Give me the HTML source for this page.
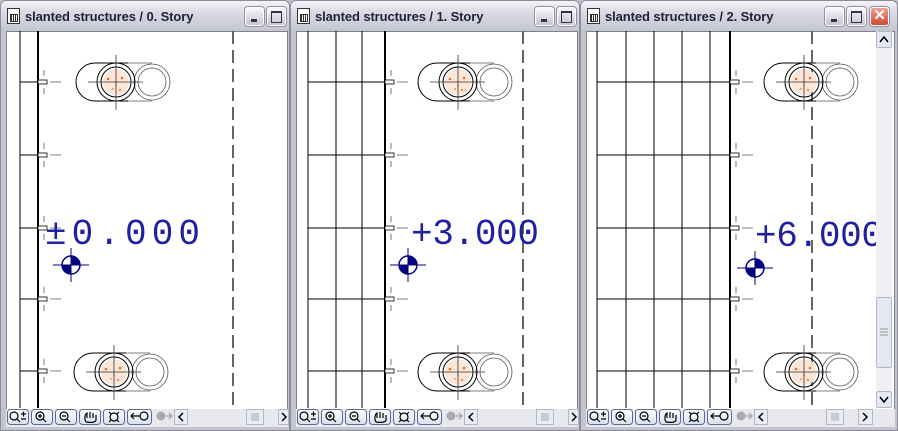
<!DOCTYPE html>
<html><head><meta charset="utf-8"><style>
body{margin:0;width:898px;height:431px;overflow:hidden;background:#c0c0c8;font-family:Tahoma,"Liberation Sans",sans-serif}
.win{position:absolute;top:0;height:431px;border:1px solid #8c8c9c;box-sizing:border-box;border-radius:6px 6px 0 0;
 background:linear-gradient(#f4f4f8 0,#dcdce6 10px,#c6c8d4 28px,#c4c4cc 30px)}
.title{position:absolute;left:24px;top:8px;font-size:13px;font-weight:bold;color:#22223a;letter-spacing:-0.1px;font-family:"Liberation Sans",sans-serif}
.ic{position:absolute;left:6px;top:7px;width:11px;height:14px;background:#fff;border:1px solid #333}
.ic:after{content:"";position:absolute;left:2px;top:5px;width:6px;height:6px;border:1px solid #333;background:repeating-linear-gradient(90deg,#333 0 1px,#fff 1px 2px)}
.btn{position:absolute;top:6px;width:19px;height:19px;border:1px solid #fff;border-radius:3px;box-sizing:border-box;background:linear-gradient(#f8f8fc,#c4c4d4);box-shadow:0 0 0 1px #9090a0}
.content{position:absolute;top:30px;background:#fff;border:1px solid #808090;box-sizing:border-box}
.tb{position:absolute;top:408px;height:18px;background:#e8e8ee}
svg{position:absolute;left:0;top:0}
</style></head><body>

<div class="win" style="left:0;width:290px">
 <div class="ic"></div><div class="title">slanted structures / 0. Story</div>
 <div class="btn" style="left:244px"><div style="position:absolute;left:5px;top:11px;width:6px;height:3px;background:#334"></div></div>
 <div class="btn" style="left:266px"><div style="position:absolute;left:3px;top:3px;width:9px;height:9px;border:1px solid #334;border-top-width:2px"></div></div>
 <div class="content" style="left:5px;width:282px;height:379px"></div>
 <div class="tb" style="left:5px;width:282px"></div>
</div>
<div class="win" style="left:290px;width:290px">
 <div class="ic"></div><div class="title">slanted structures / 1. Story</div>
 <div class="btn" style="left:244px"><div style="position:absolute;left:5px;top:11px;width:6px;height:3px;background:#334"></div></div>
 <div class="btn" style="left:266px"><div style="position:absolute;left:3px;top:3px;width:9px;height:9px;border:1px solid #334;border-top-width:2px"></div></div>
 <div class="content" style="left:5px;width:282px;height:379px"></div>
 <div class="tb" style="left:5px;width:282px"></div>
</div>
<div class="win" style="left:580px;width:318px">
 <div class="ic"></div><div class="title">slanted structures / 2. Story</div>
 <div class="btn" style="left:244px"><div style="position:absolute;left:5px;top:11px;width:6px;height:3px;background:#334"></div></div>
 <div class="btn" style="left:266px"><div style="position:absolute;left:3px;top:3px;width:9px;height:9px;border:1px solid #334;border-top-width:2px"></div></div>
 <div class="btn" style="left:289px;background:linear-gradient(#f0a090,#d04830);color:#fff;font-size:15px;line-height:16px;text-align:center;font-weight:bold">✕</div>
 <div class="content" style="left:5px;width:309px;height:379px"></div>
 <div class="tb" style="left:5px;width:309px"></div>
</div>

<svg width="898" height="431" viewBox="0 0 898 431">
<defs>
 <linearGradient id="bg" x1="0" y1="0" x2="0" y2="1"><stop offset="0" stop-color="#fff"/><stop offset="1" stop-color="#d8e0ee"/></linearGradient>
 <g id="cir">
  <path d="M-21,-19 A19,19 0 0 0 -21,19 H12 M-21,-19 H12" fill="none" stroke="#000" stroke-width="1"/>
  <path d="M12,-19 H36 M12,19 H36" stroke="#555" stroke-width="0.8"/>
  <circle cx="36" cy="0" r="18" fill="none" stroke="#555" stroke-width="0.8"/>
  <circle cx="36" cy="0" r="14" fill="none" stroke="#555" stroke-width="0.8"/>
  <circle r="13" fill="#fbe6d8"/>
  <circle r="19" fill="none" stroke="#000"/>
  <circle r="15" fill="none" stroke="#000"/>
  <g fill="#e07020"><circle cx="-8" cy="-3" r="1.3"/><circle cx="6" cy="-4" r="1.3"/><circle cx="0" cy="3" r="0.8"/><circle cx="-3" cy="7" r="0.8"/><circle cx="4" cy="8" r="1"/></g>
  <path d="M0,-27 V28 M-28,0 H27" stroke="#333" stroke-width="0.8"/>
 </g>
 <g id="mk">
  <circle r="9" fill="#fff" stroke="#000080" stroke-width="1.5"/>
  <path d="M0,0 V-9 A9,9 0 0 1 9,0 Z M0,0 V9 A9,9 0 0 1 -9,0 Z" fill="#000080"/>
  <path d="M0,-17 V17 M-18,0 H18" stroke="#000080" stroke-width="1"/>
 </g>
 <g id="tick">
  <rect x="0" y="-2" width="9" height="4" fill="#fff" stroke="#000" stroke-width="0.8"/>
  <path d="M12,0 H23 M6,-12 V-6 M6,6 V12" stroke="#555" stroke-width="0.8"/>
 </g>
 <g id="tools">
  <g fill="url(#bg)" stroke="#5a6a9a">
   <rect x="0.5" y="0.5" width="21" height="15" rx="3"/><rect x="24.5" y="0.5" width="21" height="15" rx="3"/><rect x="48.5" y="0.5" width="21" height="15" rx="3"/><rect x="72.5" y="0.5" width="21" height="15" rx="3"/><rect x="96.5" y="0.5" width="21" height="15" rx="3"/><rect x="120.5" y="0.5" width="24" height="15" rx="3"/>
  </g>
  <g fill="none" stroke="#000" stroke-width="1.2">
   <circle cx="7" cy="7" r="4"/><path d="M10,10 L13,13 M14,5 H19 M16.5,2.5 V7.5 M14,10 H19"/>
   <circle cx="33" cy="7" r="4"/><path d="M36,10 L39,13 M31,7 H35 M33,5 V9"/>
   <circle cx="57" cy="7" r="4"/><path d="M60,10 L63,13 M55,7 H59"/>
   <path d="M79,13 C77,10 78,5 80,4 V9 M83,3 V9 M86,4 V9 M89,6 V11 C89,13 85,14 79,13"/>
   <circle cx="107" cy="8" r="4"/><path d="M102,3 L104,5 M112,3 L110,5 M102,13 L104,11 M112,13 L110,11"/>
   <circle cx="137" cy="7" r="4"/><path d="M133,7 H124 M127,4 L124,7 L127,10"/>
  </g>
  <g fill="#aaa" stroke="#aaa"><circle cx="154" cy="7" r="4"/><path d="M159,7 H165 M162,4 L165,7 L162,10" fill="none" stroke-width="1.5"/></g>
 </g>
 <g id="bar">
  <rect x="174.5" y="409.5" width="13" height="15" fill="#e8ecf4" stroke="#b0b8c8"/>
  <path d="M183,413 L179,417 L183,421" fill="none" stroke="#000" stroke-width="1.5"/>
  <rect x="246.5" y="409.5" width="17" height="15" fill="#e8ecf4" stroke="#b0b8c8"/>
  <path d="M252,413 V421 M254,413 V421 M256,413 V421 M258,413 V421" stroke="#999" stroke-width="0.8"/>
 </g>
</defs>

<!-- Window 1 drawing -->
<g>
 <path d="M20,31 V408" stroke="#000" stroke-width="1"/>
 <path d="M38,31 V408" stroke="#000" stroke-width="2"/>
 <path d="M20,82 H38 M20,155 H38 M20,228 H38 M20,299 H38 M20,371 H38" stroke="#000"/>
 <use href="#tick" x="38" y="82"/><use href="#tick" x="38" y="155"/><use href="#tick" x="38" y="228"/><use href="#tick" x="38" y="299"/><use href="#tick" x="38" y="371"/>
 <path d="M233,31 V408" stroke="#666" stroke-width="2" stroke-dasharray="13,6"/>
 <use href="#cir" x="116" y="82"/><use href="#cir" x="114" y="372"/>
 <text x="45" y="244" font-family="Liberation Mono,monospace" font-size="36" fill="#2020a0" textLength="155" lengthAdjust="spacing">±0.000</text>
 <use href="#mk" x="71" y="265"/>
</g>

<!-- Window 2 drawing -->
<g>
 <path d="M308,31 V408 M336,31 V408 M362,31 V408" stroke="#000"/>
 <path d="M385,31 V408" stroke="#000" stroke-width="2"/>
 <path d="M308,82 H385 M308,155 H385 M308,228 H385 M308,299 H385 M308,371 H385" stroke="#000"/>
 <use href="#tick" x="385" y="82"/><use href="#tick" x="385" y="155"/><use href="#tick" x="385" y="228"/><use href="#tick" x="385" y="299"/><use href="#tick" x="385" y="371"/>
 <path d="M523,31 V408" stroke="#666" stroke-width="2" stroke-dasharray="13,6"/>
 <use href="#cir" x="458" y="82"/><use href="#cir" x="458" y="372"/>
 <text x="411" y="244" font-family="Liberation Mono,monospace" font-size="36" fill="#2020a0" textLength="128" lengthAdjust="spacing">+3.000</text>
 <use href="#mk" x="408" y="265"/>
</g>

<!-- Window 3 drawing -->
<svg x="586" y="31" width="290" height="377" viewBox="586 31 290 377" overflow="hidden">
 <path d="M597,31 V408 M626,31 V408 M654,31 V408 M682,31 V408 M710,31 V408" stroke="#000"/>
 <path d="M730,31 V408" stroke="#000" stroke-width="2"/>
 <path d="M597,82 H730 M597,155 H730 M597,228 H730 M597,299 H730 M597,371 H730" stroke="#000"/>
 <use href="#tick" x="730" y="82"/><use href="#tick" x="730" y="155"/><use href="#tick" x="730" y="228"/><use href="#tick" x="730" y="299"/><use href="#tick" x="730" y="371"/>
 <path d="M812,31 V408" stroke="#666" stroke-width="2" stroke-dasharray="13,6"/>
 <use href="#cir" x="804" y="82"/><use href="#cir" x="804" y="372"/>
 <text x="755" y="246" font-family="Liberation Mono,monospace" font-size="36" fill="#2020a0" textLength="128" lengthAdjust="spacing">+6.000</text>
 <use href="#mk" x="755" y="268"/>
</svg>

<!-- toolbars -->
<use href="#tools" x="7" y="409"/><use href="#bar" x="0"/>
<rect x="278.5" y="409.5" width="10" height="15" fill="#e8ecf4" stroke="#b0b8c8"/>
<path d="M282,413 L286,417 L282,421" fill="none" stroke="#000" stroke-width="1.5"/>
<use href="#tools" x="297" y="409"/><use href="#bar" x="290"/>
<rect x="568.5" y="409.5" width="10" height="15" fill="#e8ecf4" stroke="#b0b8c8"/>
<path d="M572,413 L576,417 L572,421" fill="none" stroke="#000" stroke-width="1.5"/>
<use href="#tools" x="587" y="409"/><use href="#bar" x="580"/>
<rect x="858.5" y="409.5" width="14" height="15" fill="#e8ecf4" stroke="#b0b8c8"/>
<path d="M863,413 L867,417 L863,421" fill="none" stroke="#000" stroke-width="1.5"/>
<!-- vertical scrollbar -->
<rect x="876" y="31" width="16" height="377" fill="#f0f0f4"/>
<rect x="876.5" y="31.5" width="15" height="16" rx="2" fill="#e4e8f0" stroke="#b0b8c8"/>
<path d="M880,42 L884,37 L888,42" fill="none" stroke="#000" stroke-width="1.5"/>
<rect x="876.5" y="297.5" width="15" height="70" rx="2" fill="#e4e8f0" stroke="#b0b8c8"/>
<path d="M880,329 H888 M880,332 H888 M880,335 H888" stroke="#999"/>
<rect x="876.5" y="391.5" width="15" height="16" rx="2" fill="#e4e8f0" stroke="#b0b8c8"/>
<path d="M880,397 L884,402 L888,397" fill="none" stroke="#000" stroke-width="1.5"/>
</svg>
</body></html>
